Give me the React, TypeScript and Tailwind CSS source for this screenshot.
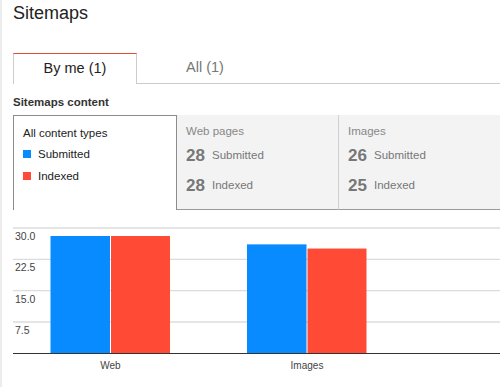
import React from 'react';

const BLUE = '#078bff';
const RED = '#ff4a36';

const GRID = [
  { y: 18, label: '30.0' },
  { y: 49.3, label: '22.5' },
  { y: 80.7, label: '15.0' },
  { y: 112, label: '7.5' },
];

const BASE = 143;
const UNIT = 4.178;

const GROUPS = [
  { name: 'Web', x: 37.5, submitted: 28, indexed: 28 },
  { name: 'Images', x: 234, submitted: 26, indexed: 25 },
];

const Chart = () => (
  <svg width="487" height="177" viewBox="0 0 487 177" className="block">
    {GRID.map((g) => (
      <g key={g.label}>
        <line x1="0" x2="487" y1={g.y} y2={g.y} stroke="#dcdcdc" strokeWidth="1.3" />
        <text x="2" y={g.y + 12} fontSize="10.5" fill="#444" fontFamily="'Liberation Sans', Arial, sans-serif">
          {g.label}
        </text>
      </g>
    ))}
    {GROUPS.map((g) => (
      <g key={g.name}>
        <rect x={g.x} y={BASE - g.submitted * UNIT} width="59.5" height={g.submitted * UNIT} fill={BLUE} />
        <rect x={g.x + 60.5} y={BASE - g.indexed * UNIT} width="59" height={g.indexed * UNIT} fill={RED} />
        <text
          x={g.x + 60}
          y="159"
          fontSize="10"
          fill="#444"
          textAnchor="middle"
          fontFamily="'Liberation Sans', Arial, sans-serif"
        >
          {g.name}
        </text>
      </g>
    ))}
    <line x1="0" x2="487" y1={BASE + 0.5} y2={BASE + 0.5} stroke="#333" strokeWidth="1.2" />
  </svg>
);

const StatPanel = ({ title, submitted, indexed, divider }: { title: string; submitted: number; indexed: number; divider?: boolean }) => (
  <div className={`flex-1 bg-[#f3f3f3] border-b border-[#9a9a9a] pl-[9px] pt-[8px] ${divider ? 'border-r border-r-[#cfcfcf]' : ''}`}>
    <div className="text-[11.5px] leading-[16px] text-[#888]">{title}</div>
    <div className="mt-[7px] flex items-center h-[20px]">
      <span className="text-[17px] font-bold text-[#777] w-[26px]">{submitted}</span>
      <span className="text-[11.5px] text-[#777]">Submitted</span>
    </div>
    <div className="mt-[10px] flex items-center h-[20px]">
      <span className="text-[17px] font-bold text-[#777] w-[26px]">{indexed}</span>
      <span className="text-[11.5px] text-[#777]">Indexed</span>
    </div>
  </div>
);

export default function App() {
  return (
    <div
      className="w-[500px] h-[387px] overflow-hidden bg-white border-l-2 border-[#ececec] pl-[11px]"
      style={{ fontFamily: "'Liberation Sans', Arial, Helvetica, sans-serif" }}
    >
      <h1 className="pt-[1px] text-[18px] leading-[24px] text-[#222]">Sitemaps</h1>

      <div className="mt-[28px] flex">
        <div className="w-[124px] h-[31px] border-t border-t-[#dd4b39] border-x border-x-[#cccccc] flex items-center justify-center text-[14.5px] text-[#222]">
          By me (1)
        </div>
        <div className="w-[136px] h-[31px] border-b border-[#cccccc] flex items-center justify-center text-[14.5px] text-[#777]">
          All (1)
        </div>
        <div className="flex-1 h-[31px] border-b border-[#cccccc]" />
      </div>

      <h2 className="mt-[10px] text-[11.5px] leading-[16px] font-bold text-[#333]">Sitemaps content</h2>

      <div className="mt-[5px] flex h-[95px]">
        <div className="w-[164px] border-l border-t border-r border-[#8c8c8c] pl-[9px] pt-[9px] text-[11.5px] text-[#222]">
          <div className="leading-[16px]">All content types</div>
          <div className="mt-[5px] flex items-center leading-[16px]">
            <span className="w-[8px] h-[8px] mr-[7px]" style={{ background: BLUE }} />
            Submitted
          </div>
          <div className="mt-[6px] flex items-center leading-[16px]">
            <span className="w-[8px] h-[8px] mr-[7px]" style={{ background: RED }} />
            Indexed
          </div>
        </div>
        <StatPanel title="Web pages" submitted={28} indexed={28} divider />
        <StatPanel title="Images" submitted={26} indexed={25} />
      </div>

      <Chart />
    </div>
  );
}
